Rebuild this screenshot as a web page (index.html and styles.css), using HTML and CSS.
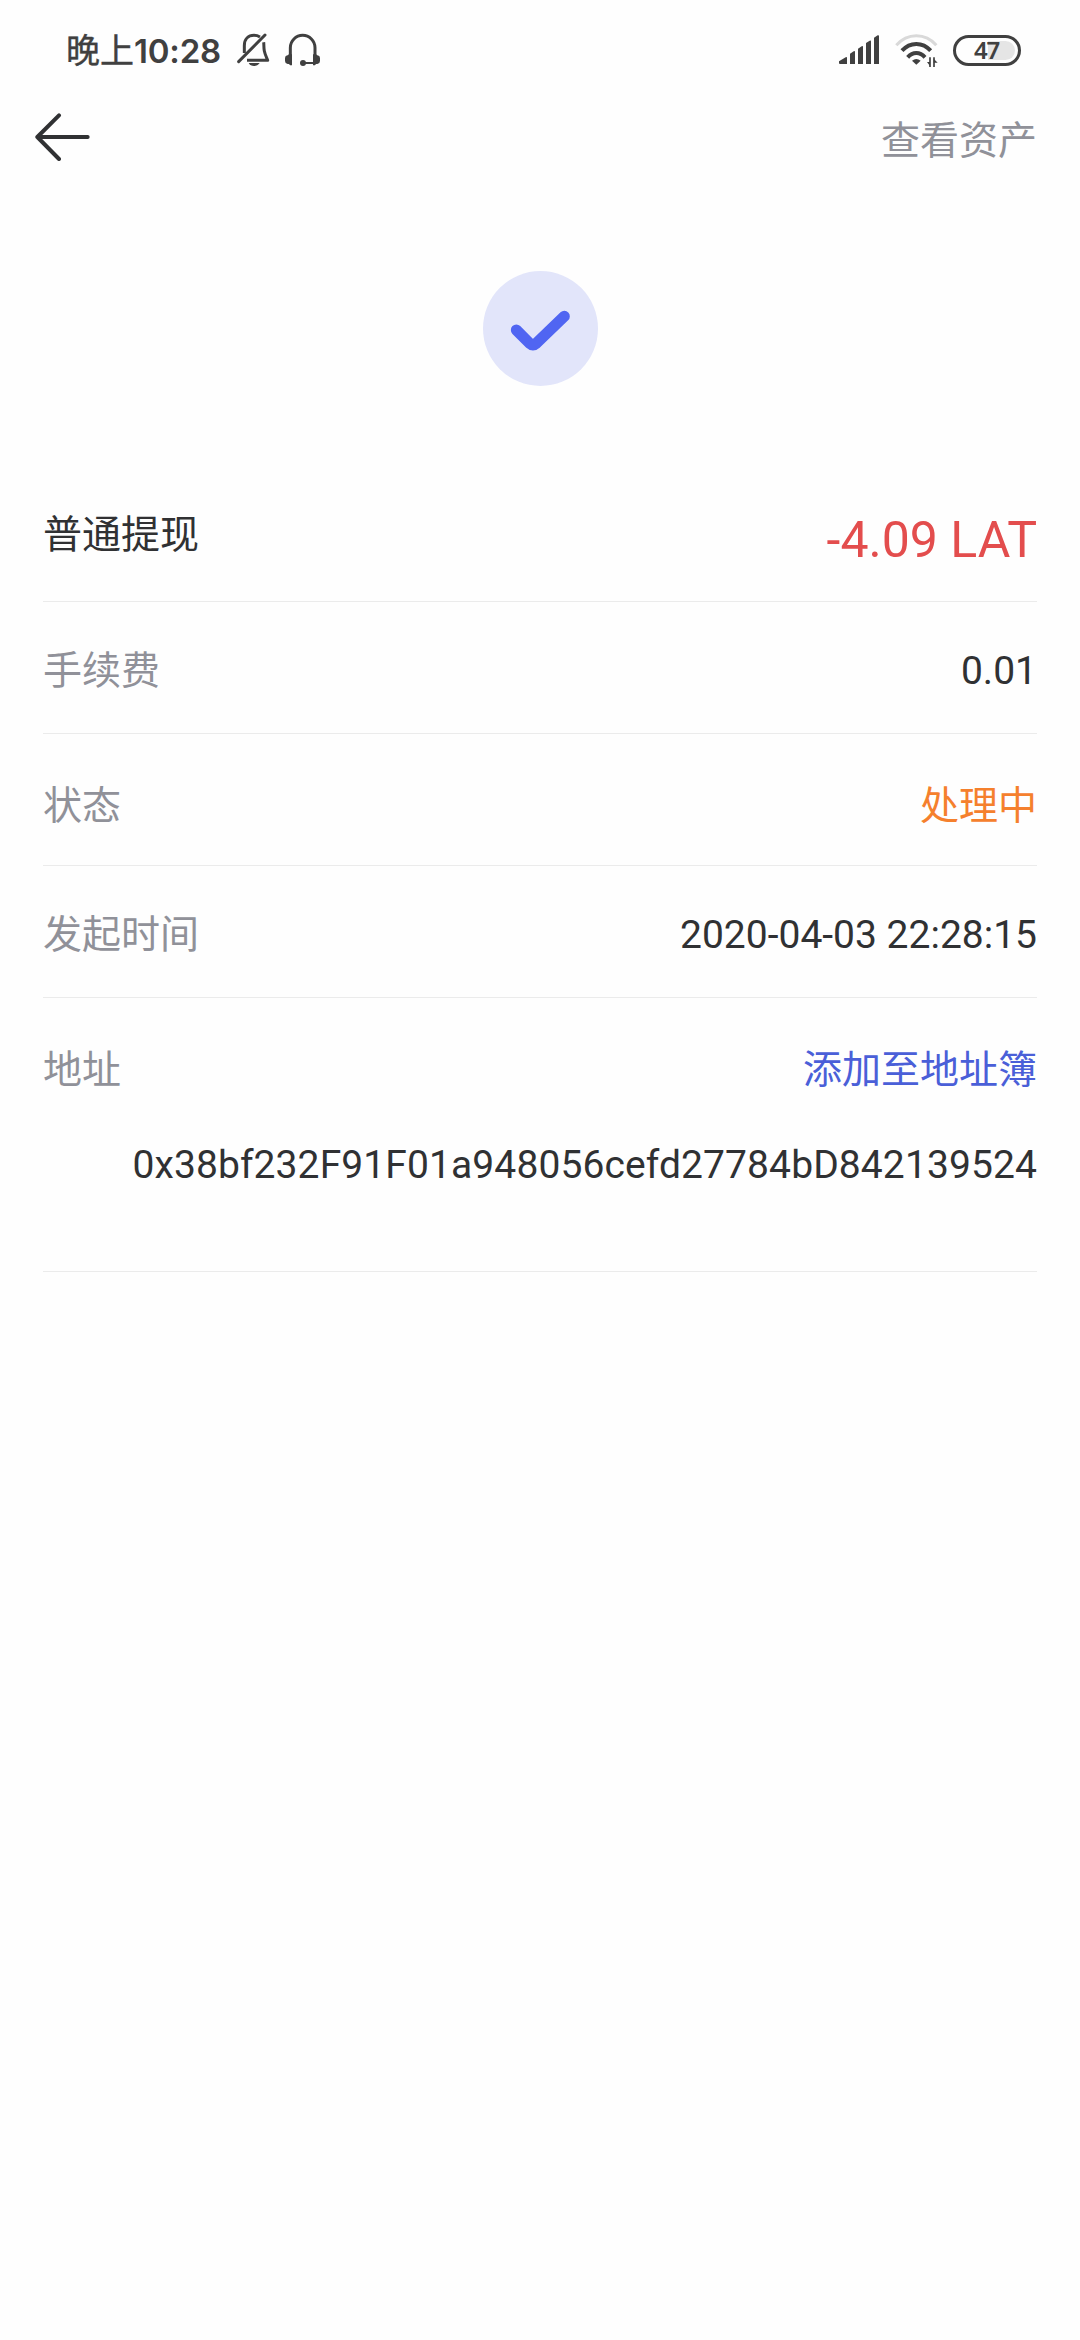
FILE: index.html
```html
<!DOCTYPE html>
<html lang="zh-CN">
<head>
  <meta charset="UTF-8">
  <meta name="viewport" content="width=device-width, initial-scale=1">
  <title>普通提现</title>
  <link rel="stylesheet" href="styles.css">
</head>
<body>
  <div class="status-bar">
    <div class="status-left">
      <span class="time">晚上<b>10:28</b></span>
      <svg class="icon-bell" viewBox="0 0 99 102" fill="none" stroke="#404040" stroke-width="9">
        <path d="M22 60V38C22 18 34 7 51 7C58 7 64 9 69 12"/>
        <path d="M80 28C81 34 80 44 82 54C84 64 88 72 92 82H30" stroke-linejoin="round"/>
        <path d="M5 86L84 6" stroke-linecap="round"/>
        <path d="M35 90H68C64 96 58 99 51 99S38 96 35 90Z" fill="#404040" stroke="none"/>
      </svg>
      <svg class="icon-headset" viewBox="0 0 105 102" fill="none" stroke="#404040" stroke-width="9">
        <path d="M16 70V44A37 37 0 0 1 90 44V70"/>
        <path d="M54 90H92" stroke-width="6"/>
        <circle cx="54" cy="90" r="9" fill="#404040" stroke="none"/>
        <path d="M12 64H21V97H15L12 93H8Q0 91 0 84V75Q0 68 8 67ZM93 64H84V97H90L93 93H97Q105 91 105 84V75Q105 68 97 67Z" fill="#404040" stroke="none"/>
      </svg>
    </div>
    <div class="status-right">
      <svg class="icon-signal" viewBox="0 0 120 87" fill="#404040">
        <path d="M0 79L20 67Q24 65 24 69V87H3Q0 87 0 84Z"/>
        <path d="M33 56L44 49Q48 47 48 51V87H33Z"/>
        <path d="M57 41L68 34Q72 32 72 36V87H57Z"/>
        <path d="M81 24L92 17Q96 15 96 19V87H81Z"/>
        <path d="M105 8L116 1Q120 0 120 3V87H105Z"/>
      </svg>
      <svg class="icon-wifi" viewBox="0 0 129 102" fill="none" stroke="#404040" stroke-width="12">
        <path d="M4 34C37 -4 91 -4 124 34" stroke="#d9d9d9" stroke-width="9"/>
        <path d="M21 50C45 23 83 23 107 50"/>
        <path d="M38 70C53 53 75 53 90 70"/>
        <path d="M51 80Q64 70 77 80L64 92Z" fill="#404040" stroke="none"/>
        <path d="M96 84H105V96ZM116 74V86H128Z" fill="#404040" stroke="none"/>
        <path d="M105 70V99M117 70V99" stroke-width="5"/>
      </svg>
      <div class="battery"><span>47</span></div>
    </div>
  </div>

  <header class="nav-bar">
    <svg class="icon-back" viewBox="0 0 165 144" fill="none" stroke="#303133" stroke-width="12" stroke-linecap="round" stroke-linejoin="round">
      <path d="M72 7L7 72L72 138M7 72H158"/>
    </svg>
    <a class="nav-link">查看资产</a>
  </header>

  <div class="result">
    <svg viewBox="0 0 345 345">
      <circle cx="172.500" cy="172.500" r="172.500" fill="#e2e5fa"/>
      <path d="M100 177L140 217Q150 226 160 217L244 136" fill="none" stroke="#5065f2" stroke-width="33" stroke-linecap="round" stroke-linejoin="round"/>
    </svg>
  </div>

  <main class="detail">
    <div class="row row-amount">
      <span class="title">普通提现</span>
      <span class="amount">-4.09 LAT</span>
    </div>
    <div class="row row-fee">
      <span class="label">手续费</span>
      <span class="value">0.01</span>
    </div>
    <div class="row row-status">
      <span class="label">状态</span>
      <span class="value pending">处理中</span>
    </div>
    <div class="row row-time">
      <span class="label">发起时间</span>
      <span class="value">2020-04-03 22:28:15</span>
    </div>
    <div class="row row-address">
      <span class="label">地址</span>
      <a class="value link">添加至地址簿</a>
      <p class="address">0x38bf232F91F01a948056cefd27784bD842139524</p>
    </div>
  </main>
</body>
</html>
```
FILE: styles.css
```css
html, body {
  margin: 0;
  padding: 0;
  background: #fefefe;
}

body {
  min-height: 2340px;
  box-sizing: border-box;
  font-family: Roboto, "Noto Sans CJK SC", sans-serif;
  font-size: 39px;
  line-height: 46px;
  color: #303133;
}

svg {
  display: block;
  flex: none;
}

.status-bar {
  display: flex;
  justify-content: space-between;
  height: 100px;
  padding: 0 60px 0 66px;
  box-sizing: border-box;
  color: #404040;
}

.status-left,
.status-right {
  display: flex;
  align-items: flex-start;
}

.time {
  width: 171px;
  padding-top: 28px;
  font-family: Inter, "Noto Sans CJK SC", sans-serif;
  font-size: 34px;
  -webkit-text-stroke: 0.4px #404040;
  white-space: nowrap;
}

.time b {
  font-size: 33px;
  font-weight: 600;
  letter-spacing: -0.2px;
  -webkit-text-stroke: 0;
}

.icon-bell {
  width: 33px;
  height: 34px;
  margin-top: 33px;
}

.icon-headset {
  width: 35px;
  height: 34px;
  margin: 33px 0 0 15px;
}

.icon-signal {
  width: 40px;
  height: 29px;
  margin-top: 35px;
}

.icon-wifi {
  width: 43px;
  height: 34px;
  margin: 34px 0 0 16px;
}

.battery {
  position: relative;
  width: 68px;
  height: 31px;
  margin: 35px -1px 0 15px;
  border: 3px solid #404040;
  border-radius: 16px;
  box-sizing: border-box;
}

.battery::before {
  content: "";
  position: absolute;
  right: 3px;
  top: 3px;
  width: 27px;
  height: 19px;
  border-radius: 0 10px 10px 0;
  background: #e5e5e5;
}

.battery span {
  position: relative;
  display: block;
  margin-left: 18px;
  font-family: "Noto Sans", sans-serif;
  font-size: 24px;
  line-height: 23px;
  font-weight: 600;
  letter-spacing: -1.2px;
}

.nav-bar {
  display: flex;
  justify-content: space-between;
  align-items: flex-start;
  height: 171px;
  padding: 0 43px 0 35px;
}

.icon-back {
  width: 55px;
  height: 48px;
  margin-top: 13px;
}

.nav-link {
  margin-top: 18px;
  color: #909199;
}

.result {
  display: flex;
  justify-content: center;
  height: 199px;
}

.result svg {
  width: 115px;
  height: 115px;
}

.detail {
  margin: 0 43px;
}

.row {
  display: flex;
  flex-wrap: wrap;
  align-items: flex-start;
  justify-content: space-between;
  height: 132px;
  border-bottom: 1px solid #ebebeb;
  box-sizing: border-box;
}

.label {
  color: #909199;
}

.amount {
  margin-top: -2px;
  font-size: 50px;
  line-height: 60px;
  color: #e34d4d;
}

.row-amount {
  padding-top: 42px;
}

.row-fee {
  padding-top: 46px;
}

.row-status {
  padding-top: 49px;
}

.row-time {
  padding-top: 46px;
}

.row-address {
  height: 274px;
  padding-top: 49px;
  align-content: flex-start;
}

.pending {
  color: #f5802d;
}

.link {
  color: #4a5fd8;
}

.address {
  width: 100%;
  margin: 49px 0 0;
  text-align: right;
  letter-spacing: 0.1px;
}
```
